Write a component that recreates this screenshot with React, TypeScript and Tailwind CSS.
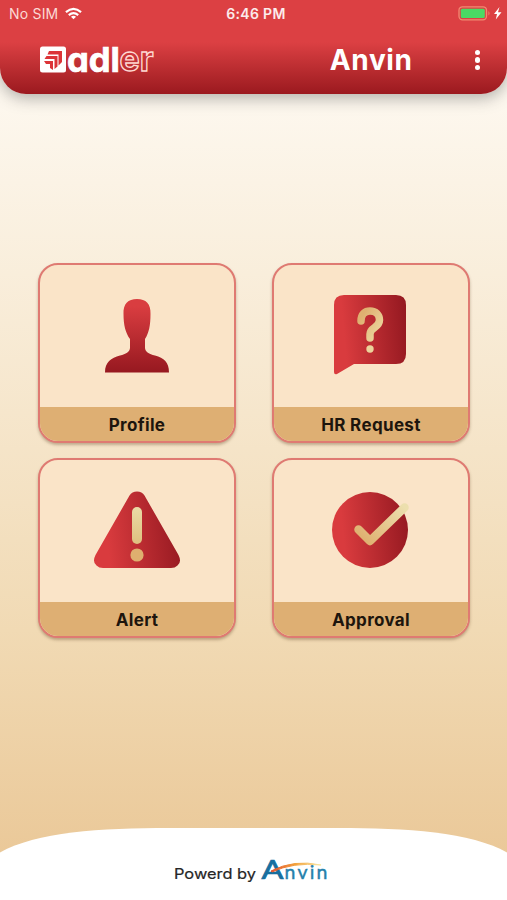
import type { ReactNode } from 'react';

interface TileProps {
  label: string;
  children: ReactNode;
}

function Gradients() {
  return (
    <svg width="0" height="0" className="absolute" aria-hidden="true">
      <defs>
        <linearGradient id="redDown" x1="0" y1="0" x2="0" y2="1">
          <stop offset="0.1" stopColor="#d93d40" />
          <stop offset="1" stopColor="#961820" />
        </linearGradient>
        <linearGradient id="redAcross" x1="0" y1="0.1" x2="1" y2="0">
          <stop offset="0.1" stopColor="#d93b3e" />
          <stop offset="1" stopColor="#931820" />
        </linearGradient>
        <linearGradient id="gold" gradientUnits="userSpaceOnUse" x1="28" y1="28" x2="50" y2="42">
          <stop offset="0" stopColor="#dfb070" />
          <stop offset="1" stopColor="#ecd79f" />
        </linearGradient>
        <linearGradient id="goldCheck" gradientUnits="userSpaceOnUse" x1="36" y1="54" x2="72" y2="16">
          <stop offset="0" stopColor="#dfb070" />
          <stop offset="1" stopColor="#ecdfae" />
        </linearGradient>
        <linearGradient id="goldBar" x1="0" y1="0" x2="0" y2="1">
          <stop offset="0" stopColor="#eadba6" />
          <stop offset="1" stopColor="#dfc07f" />
        </linearGradient>
        <linearGradient id="swoosh" x1="0" y1="0" x2="1" y2="0">
          <stop offset="0" stopColor="#e4502c" />
          <stop offset="0.5" stopColor="#f2a33c" />
          <stop offset="1" stopColor="#fbe9a8" />
        </linearGradient>
      </defs>
    </svg>
  );
}

function Tile({ label, children }: TileProps) {
  return (
    <button className="flex h-[180px] w-[198px] flex-col overflow-hidden rounded-[20px] border-2 border-[#df7a72] bg-[#fae4c8] shadow-[0_2px_3px_rgba(90,60,30,0.35)]">
      <span className="flex w-full flex-1 items-start justify-center">{children}</span>
      <span className="flex h-[34px] w-full items-center justify-center bg-[#deaf73] pt-[3px] text-[17px] font-bold tracking-[0.35px] text-[#1d150d]">
        {label}
      </span>
    </button>
  );
}

function ProfileIcon() {
  return (
    <svg width="80" height="110" viewBox="0 1 80 110">
      <path
        d="M40 35C49 35 54 40 53.500 50C53.500 61 52 69 48 75V84C48.500 88 52 90 58 91.500C67 94 72 98 72 108.500H8C8 98 14 94 23 91.500C29 90 32.500 88 33 84V75C28.500 69 26.500 61 26.500 50C26 40 31 35 40 35Z"
        fill="url(#redDown)"
      />
    </svg>
  );
}

function RequestIcon() {
  return (
    <svg width="80" height="114" viewBox="1 -29 80 114" fill="none">
      <path
        d="M14 1H66Q76 1 76 11V60Q76 70 66 70H24L7 80Q4 81 4 78V11Q4 1 14 1Z"
        fill="url(#redAcross)"
      />
      <path
        d="M31 27C31 20 35 17 40 17C46 17 49.500 21 49.500 26C49.500 34 40 33 40 40V44"
        stroke="url(#gold)"
        strokeWidth="7.500"
        strokeLinecap="round"
        strokeLinejoin="round"
      />
      <circle cx="40" cy="55" r="3.700" fill="#ecd39b" />
    </svg>
  );
}

function AlertIcon() {
  return (
    <svg width="90" height="112" viewBox="0 -29 90 112">
      <path
        d="M37.500 6.500Q40 2.500 45 2.500Q50 2.500 52.500 6.500L86.500 66Q90 73 85.500 76.500Q83 79 79 79H11Q7 79 4.500 76.500Q0 73 3.500 66Z"
        fill="url(#redAcross)"
      />
      <rect x="40" y="18" width="10" height="37" rx="5" fill="url(#goldBar)" />
      <circle cx="45" cy="66" r="6.600" fill="#dfaf6f" />
    </svg>
  );
}

function ApprovalIcon() {
  return (
    <svg width="80" height="112" viewBox="1 -29 80 112" fill="none" className="overflow-visible">
      <circle cx="40" cy="41" r="38" fill="url(#redAcross)" />
      <path
        d="M28.500 40.500L40 52L74.500 18.500"
        stroke="url(#goldCheck)"
        strokeWidth="8.500"
        strokeLinecap="round"
        strokeLinejoin="round"
      />
    </svg>
  );
}

function StatusBar() {
  return (
    <div className="grid h-7 grid-cols-3 items-center pl-[9px] pr-1 text-[14px] text-white/90">
      <div className="-mt-px flex items-center gap-[7px] text-[#fbd9d5]">
        <span className="tracking-[0.2px]">No SIM</span>
        <svg width="17" height="13" viewBox="0 0 18 13" fill="none" stroke="#fff" strokeWidth="2.300">
          <path d="M1 5Q9 -2 17 5" />
          <path d="M4 8.200Q9 4 14 8.200" />
          <path d="M6.300 10Q9 8 11.700 10L9 12.700Z" fill="#fff" stroke="none" />
        </svg>
      </div>
      <span className="-mt-[2px] text-center font-semibold tracking-[0.3px]">6:46 PM</span>
      <div className="-mt-[2px] flex justify-end">
        <svg width="45" height="15" viewBox="0 0 45 15" fill="none">
          <rect x="1" y="0.800" width="27.500" height="13" rx="3.500" stroke="#f08a72" strokeWidth="1.300" />
          <rect x="2.800" y="2.700" width="24" height="9.200" rx="1.500" fill="#4bd964" />
          <path d="M30.500 5Q32.500 7.300 30.500 9.600Z" fill="#f08a72" />
          <path d="M41.500 1L36 8H39L37.800 13.500L43.500 6.300H40Z" fill="#fff" />
        </svg>
      </div>
    </div>
  );
}

function AdlerLogo() {
  return (
    <svg width="116" height="56" viewBox="0 -12 116 56">
      <rect x="1" y="2.500" width="26" height="26" rx="2.500" fill="#fff" />
      <g fill="#dc3438">
        <path d="M10 7H23V18L19.500 21.500V10.500H8.500Z" />
        <path d="M7.500 12H18.500V22.500L15.500 25V15H5.500Z" />
        <path d="M5 17H14V26L11 24V20H7Z" />
      </g>
      <text
        x="28"
        y="27.500"
        fill="#fff"
        stroke="#fff"
        strokeWidth="0.700"
        fontSize="34"
        fontWeight="700"
        textLength="53"
        lengthAdjust="spacingAndGlyphs"
        className="font-[Inter,sans-serif] [font-feature-settings:'cv11']"
      >
        adl
      </text>
      <text
        x="80.500"
        y="27"
        fill="none"
        stroke="#ffd9d3"
        strokeWidth="1.300"
        fontSize="34"
        fontWeight="700"
        textLength="34"
        lengthAdjust="spacingAndGlyphs"
        className="font-[Inter,sans-serif]"
      >
        er
      </text>
    </svg>
  );
}

function Header() {
  return (
    <header className="h-[94px] rounded-b-[26px] bg-linear-to-b from-[#dc4043] from-45% to-[#9b191f] shadow-[0_4px_16px_rgba(60,60,60,0.4)]">
      <StatusBar />
      <div className="flex h-16 items-center pl-[39px] pr-[27px]">
        <AdlerLogo />
        <h1 className="ml-auto text-[28px] font-bold tracking-[0.6px] text-white">Anvin</h1>
        <div className="ml-[62px] flex flex-col gap-[2px]">
          <span className="size-[5.500px] rounded-full bg-white" />
          <span className="size-[5.500px] rounded-full bg-white" />
          <span className="size-[5.500px] rounded-full bg-white" />
        </div>
      </div>
    </header>
  );
}

function Footer() {
  return (
    <footer className="flex h-[72px] flex-col">
      <svg width="507" height="26" viewBox="0 0 507 26" className="block">
        <path d="M0 24.500C36 4 100 0 170 0H337C407 0 471 4 507 24.500V26H0Z" fill="#fff" />
      </svg>
      <div className="flex flex-1 justify-center bg-white pr-[6px]">
        <svg width="156" height="32" viewBox="0 0 156 32">
          <text
            x="1"
            y="25"
            fill="#262626"
            stroke="#262626"
            strokeWidth="0.200"
            fontSize="14.500"
            textLength="82"
            lengthAdjust="spacingAndGlyphs"
            className="font-[Inter,sans-serif]"
          >
            Powerd by
          </text>
          <text
            x="88.500"
            y="25"
            fill="#176f9f"
            stroke="#176f9f"
            strokeWidth="0.700"
            fontSize="26.500"
            textLength="22"
            lengthAdjust="spacingAndGlyphs"
            className="font-[Lato,sans-serif]"
          >
            A
          </text>
          <text
            x="111.500"
            y="25"
            fill="#2581ac"
            stroke="#2581ac"
            strokeWidth="0.400"
            fontSize="19.500"
            textLength="43"
            className="font-[Lato,sans-serif]"
          >
            nvin
          </text>
          <path d="M98 17Q121 5 148 11Q120 8 99 18Z" fill="url(#swoosh)" stroke="url(#swoosh)" strokeWidth="1" />
        </svg>
      </div>
    </footer>
  );
}

export default function App() {
  return (
    <div className="flex h-[900px] w-[507px] flex-col overflow-hidden bg-linear-to-b from-[#fffdf9] via-[#f1dab4] via-70% to-[#e9c593] font-[Inter,sans-serif]">
      <Gradients />
      <Header />
      <main className="flex flex-1 justify-center pt-[169px]">
        <div className="grid h-fit grid-cols-2 gap-x-9 gap-y-[15px] pl-px">
          <Tile label="Profile">
            <ProfileIcon />
          </Tile>
          <Tile label="HR Request">
            <RequestIcon />
          </Tile>
          <Tile label="Alert">
            <AlertIcon />
          </Tile>
          <Tile label="Approval">
            <ApprovalIcon />
          </Tile>
        </div>
      </main>
      <Footer />
    </div>
  );
}
